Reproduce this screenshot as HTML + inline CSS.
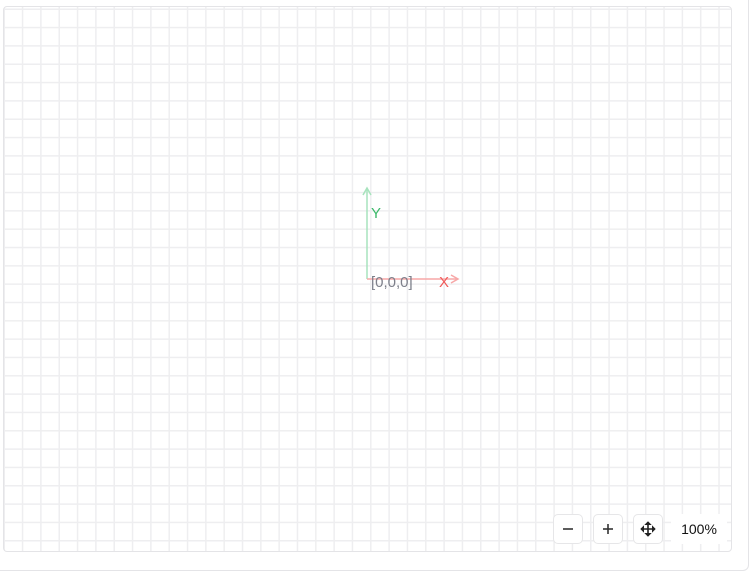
<!DOCTYPE html>
<html><head><style>
body{margin:0;width:754px;height:572px;background:#fff;font-family:"Liberation Sans",sans-serif;overflow:hidden;position:relative}
.outer{position:absolute;left:-10px;top:-10px;width:757px;height:579px;border:1px solid #e4e4e7;border-radius:6px}
.panel{position:absolute;left:3px;top:6px;width:727px;height:544px;border:1px solid #e4e4e7;border-radius:4px;overflow:hidden;
background-color:#fff;
background-image:linear-gradient(to right,#eeeef0 1.3px,transparent 1.3px),linear-gradient(to bottom,#eeeef0 1.3px,transparent 1.3px);
background-size:18.33px 18.33px;background-position:-0.5px 1.5px}
.btn{position:absolute;top:514px;width:30px;height:30px;border:1px solid #e6e6e8;border-radius:5px;background:#fff;box-sizing:border-box;display:flex;align-items:center;justify-content:center}
.pct{position:absolute;left:671px;top:514px;width:56px;height:30px;background:#fff;font-size:14px;line-height:30px;text-align:center;color:#111}
</style></head><body>
<div class="outer"></div>
<div class="panel"></div>
<svg style="position:absolute;left:0;top:0" width="754" height="572">
<line x1="367" y1="279" x2="367" y2="188" stroke="#a7e3bd" stroke-width="1.5"/>
<polyline points="363,195 367,188 371,195" fill="none" stroke="#a7e3bd" stroke-width="1.5"/>
<line x1="367" y1="279" x2="458" y2="279" stroke="#f7a7a7" stroke-width="1.5"/>
<polyline points="451,275 458,279 451,283" fill="none" stroke="#f7a7a7" stroke-width="1.5"/>
<text x="371" y="218" font-size="15" fill="#3cb96a" font-family="Liberation Sans">Y</text>
<text x="439" y="287" font-size="15" fill="#f05a5a" font-family="Liberation Sans">X</text>
<text x="371" y="287" font-size="15" fill="#7c7f8a" font-family="Liberation Sans">[0,0,0]</text>
</svg>
<div class="btn" style="left:553px"><svg width="14" height="14"><line x1="2" y1="7" x2="12" y2="7" stroke="#333" stroke-width="1.6"/></svg></div>
<div class="btn" style="left:593px"><svg width="14" height="14"><line x1="2" y1="7" x2="12" y2="7" stroke="#333" stroke-width="1.6"/><line x1="7" y1="2" x2="7" y2="12" stroke="#333" stroke-width="1.6"/></svg></div>
<div class="btn" style="left:633px"><svg width="16" height="16"><path d="M8 1V15M1 8H15" stroke="#222" stroke-width="1.6"/><path d="M5.5 3.5L8 1 10.5 3.5ZM5.5 12.5L8 15 10.5 12.5ZM3.5 5.5L1 8 3.5 10.5ZM12.5 5.5L15 8 12.5 10.5Z" fill="#222" stroke="#222" stroke-width="1"/></svg></div>
<div class="pct">100%</div>
</body></html>
